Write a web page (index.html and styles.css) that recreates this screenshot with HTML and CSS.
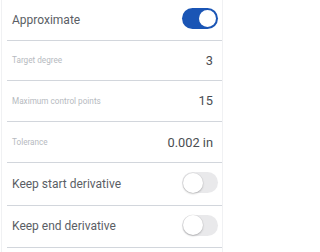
FILE: index.html
```html
<!DOCTYPE html>
<html>
<head>
<meta charset="utf-8">
<link rel="stylesheet" href="styles.css">
</head>
<body>
<div class="panel">
  <div class="row row-toggle first">
    <span class="title">Approximate</span>
    <span class="switch on"><span class="knob"></span></span>
  </div>
  <div class="row short">
    <span class="label">Target degree</span>
    <span class="value">3</span>
  </div>
  <div class="row tall">
    <span class="label">Maximum control points</span>
    <span class="value">15</span>
  </div>
  <div class="row">
    <span class="label">Tolerance</span>
    <span class="value">0.002 in</span>
  </div>
  <div class="row row-toggle tall2">
    <span class="title">Keep start derivative</span>
    <span class="switch"><span class="knob"></span></span>
  </div>
  <div class="row row-toggle tall2">
    <span class="title">Keep end derivative</span>
    <span class="switch"><span class="knob"></span></span>
  </div>
</div>
</body>
</html>
```
FILE: styles.css
```css
html, body {
  margin: 0;
  padding: 0;
  background: #ffffff;
}
body {
  font-family: Roboto, "Liberation Sans", sans-serif;
  width: 226px;
  height: 252px;
  overflow: hidden;
}
.panel {
  margin-left: 1px;
  margin-right: 3px;
  border-left: 1px solid #f0f1f3;
  border-right: 1px solid #f0f1f3;
  height: 252px;
  padding: 0 0 0 5px;
  box-sizing: border-box;
}
.row {
  display: flex;
  align-items: center;
  justify-content: space-between;
  height: 40px;
  border-bottom: 1.5px solid #d2d6dc;
  padding: 0 9px 0 5px;
  box-sizing: content-box;
}
.row.short {
  height: 38.5px;
}
.row.tall {
  height: 40.5px;
}
.row.tall2 {
  height: 41.5px;
}
.row.first {
  height: 40px;
}
.row-toggle {
  padding-right: 4px;
}
.title {
  font-size: 12px;
  color: #5a5e65;
}
.label {
  font-size: 8.2px;
  color: #b6bac0;
}
.value {
  font-size: 12.8px;
  color: #4a4d52;
}
.switch {
  width: 36px;
  height: 21px;
  border-radius: 11px;
  background: #e9e9eb;
  position: relative;
  box-sizing: border-box;
  margin-top: -2px;
}
.switch .knob {
  position: absolute;
  top: 0.5px;
  left: 0.5px;
  width: 20px;
  height: 20px;
  border-radius: 50%;
  background: #fff;
  box-shadow: 0 1px 2px rgba(0,0,0,0.22), 0 0 0 0.5px rgba(0,0,0,0.06);
}
.switch.on {
  background: #1a55b5;
  margin-top: -4px;
}
.switch.on .knob {
  left: auto;
  right: 2px;
  top: 2px;
  width: 17px;
  height: 17px;
  box-shadow: none;
}
```
